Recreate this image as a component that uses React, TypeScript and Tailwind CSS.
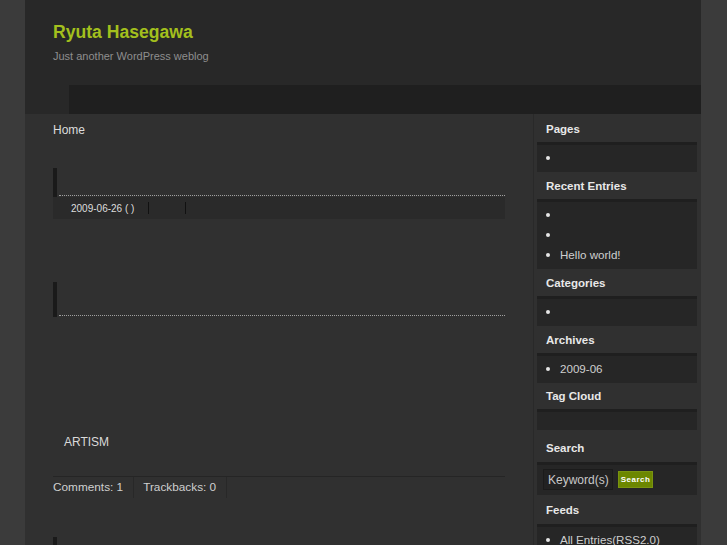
import React from 'react';

const Bullet: React.FC<{ text?: string }> = ({ text }) => (
    <li className="flex items-center h-[20px]">
        <span className="h-[4px] w-[4px] rounded-full bg-[#e6e6e6]" />
        {text && <span className="ml-[10px] text-[11.6px] text-[#cfcfcf]">{text}</span>}
    </li>
);

const Widget: React.FC<{ title: string; head?: string; children?: React.ReactNode; box?: string }> = ({
    title,
    head = 'h-[27px] pt-[7px]',
    children,
    box = 'pt-[3px] pb-[4px]',
}) => (
    <div>
        <h3 className={`${head} pl-[9px] text-[11.5px] leading-[14px] font-bold text-[#e8e8e8]`}>{title}</h3>
        <div className={`border-t-[3px] border-[#1f1f1f] bg-[#262626] pl-[9px] ${box}`}>{children}</div>
    </div>
);

const PostTitle: React.FC<{ height: string }> = ({ height }) => (
    <div className={`flex ${height}`}>
        <div className="w-[4px] bg-[#1a1a1a]" />
        <div className="flex-1 ml-[2px] mb-[1px] border-b border-dotted border-[#a0a0a0]" />
    </div>
);

const App: React.FC = () => {
    return (
        <div className="min-h-screen bg-[#3b3b3b] font-['Liberation_Sans',Arial,sans-serif]">
            <div className="ml-[25px] w-[676px]">
                <header className="h-[85px] bg-[#282828] pl-[28px] pt-[22px]">
                    <h1 className="text-[17.6px] leading-[20px] font-bold text-[#a3c01d]">Ryuta Hasegawa</h1>
                    <p className="mt-[7px] text-[11px] leading-[14px] text-[#8e8e8e]">Just another WordPress weblog</p>
                </header>

                <nav className="flex h-[29px] bg-[#282828] pl-[44px]">
                    <div className="flex-1 bg-[#1f1f1f]" />
                </nav>

                <div className="flex bg-[#303030]">
                    <main className="w-[508px] px-[28px] pt-[8px] pb-[40px]">
                        <p className="text-[12px] leading-[16px] text-[#dcdcdc]">Home</p>

                        <div className="mt-[30px]">
                            <PostTitle height="h-[29px]" />
                            <div className="flex items-center h-[22px] bg-[#2a2a2a] pl-[18px] text-[10px] text-[#dedede]">
                                <span className="pr-[14px]">2009-06-26 ( )</span>
                                <span className="h-[12px] w-[1px] bg-[#111]" />
                                <span className="w-[36px]" />
                                <span className="h-[12px] w-[1px] bg-[#111]" />
                            </div>
                        </div>

                        <div className="mt-[63px]">
                            <PostTitle height="h-[35px]" />
                            <p className="mt-[118px] pl-[11px] text-[12px] leading-[14px] text-[#dadada]">ARTISM</p>
                            <div className="mt-[27px] border-t border-[#252525] flex h-[22px] items-stretch text-[11.8px] text-[#cfcfcf]">
                                <span className="flex items-center pr-[10px] border-r border-[#282828]">Comments: 1</span>
                                <span className="flex items-center pl-[9px] pr-[10px] border-r border-[#282828]">Trackbacks: 0</span>
                            </div>
                        </div>

                        <div className="mt-[39px]">
                            <PostTitle height="h-[29px]" />
                        </div>
                    </main>

                    <aside className="w-[168px] border-l border-[#292929] pl-[3px] pr-[4px] pt-[1px]">
                        <Widget title="Pages">
                            <ul><Bullet /></ul>
                        </Widget>
                        <Widget title="Recent Entries">
                            <ul>
                                <Bullet />
                                <Bullet />
                                <Bullet text="Hello world!" />
                            </ul>
                        </Widget>
                        <Widget title="Categories" head="h-[27px] pt-[7px]">
                            <ul><Bullet /></ul>
                        </Widget>
                        <Widget title="Archives">
                            <ul><Bullet text="2009-06" /></ul>
                        </Widget>
                        <Widget title="Tag Cloud" head="h-[26px] pt-[6px]" box="h-[21px]" />
                        <Widget title="Search" head="h-[32px] pt-[11px]" box="pt-[4px] pb-[5px] !pl-[6px]">
                            <div className="flex items-center">
                                <div className="w-[70px] h-[21px] bg-[#222] border border-[#1b1b1b] pl-[4px] flex items-center text-[12px] text-[#c8c8c8]">
                                    Keyword(s)
                                </div>
                                <button className="ml-[5px] w-[35px] h-[17px] bg-[#6c8700] border border-[#7a9410] text-[8px] font-bold text-white tracking-[0.5px] leading-none">
                                    Search
                                </button>
                            </div>
                        </Widget>
                        <Widget title="Feeds" head="h-[29px] pt-[8px]">
                            <ul><Bullet text="All Entries(RSS2.0)" /></ul>
                        </Widget>
                    </aside>
                </div>
            </div>
        </div>
    );
};

export default App;
